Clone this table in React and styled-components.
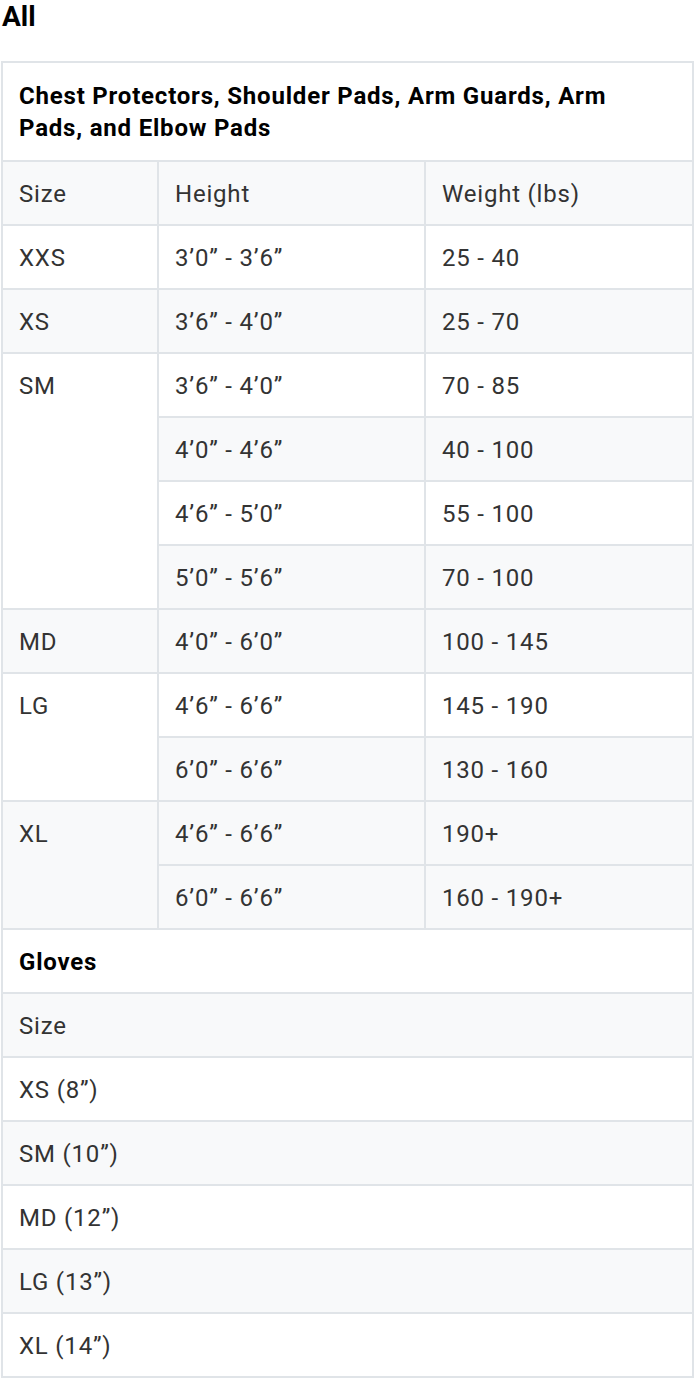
import styled, { createGlobalStyle } from "styled-components";

const chestRows = [
  { size: "XXS", shade: false, rows: [["3’0” - 3’6”", "25 - 40", false]] },
  { size: "XS", shade: true, rows: [["3’6” - 4’0”", "25 - 70", true]] },
  {
    size: "SM",
    shade: false,
    rows: [
      ["3’6” - 4’0”", "70 - 85", false],
      ["4’0” - 4’6”", "40 - 100", true],
      ["4’6” - 5’0”", "55 - 100", false],
      ["5’0” - 5’6”", "70 - 100", true],
    ],
  },
  { size: "MD", shade: true, rows: [["4’0” - 6’0”", "100 - 145", true]] },
  {
    size: "LG",
    shade: false,
    rows: [
      ["4’6” - 6’6”", "145 - 190", false],
      ["6’0” - 6’6”", "130 - 160", true],
    ],
  },
  {
    size: "XL",
    shade: true,
    rows: [
      ["4’6” - 6’6”", "190+", true],
      ["6’0” - 6’6”", "160 - 190+", true],
    ],
  },
];

const gloveSizes = ["XS (8”)", "SM (10”)", "MD (12”)", "LG (13”)", "XL (14”)"];

export default function App() {
  return (
    <>
      <GlobalStyle />
      <Page>
        <Heading>All</Heading>
        <SizeTable>
          <colgroup>
            <col style={{ width: 156 }} />
            <col style={{ width: 267 }} />
            <col style={{ width: 268 }} />
          </colgroup>
          <tbody>
            <tr>
              <TitleCell colSpan={3} $wrap>
                Chest Protectors, Shoulder Pads, Arm Guards, Arm Pads, and Elbow Pads
              </TitleCell>
            </tr>
            <tr>
              <Cell $shade>Size</Cell>
              <Cell $shade>Height</Cell>
              <Cell $shade>Weight (lbs)</Cell>
            </tr>
            {chestRows.map((group) =>
              group.rows.map(([height, weight, shade], i) => (
                <tr key={group.size + i}>
                  {i === 0 && (
                    <Cell rowSpan={group.rows.length} $shade={group.shade}>
                      {group.size}
                    </Cell>
                  )}
                  <Cell $shade={shade}>{height}</Cell>
                  <Cell $shade={shade}>{weight}</Cell>
                </tr>
              ))
            )}
            <tr>
              <TitleCell colSpan={3}>Gloves</TitleCell>
            </tr>
            <tr>
              <Cell colSpan={3} $shade>
                Size
              </Cell>
            </tr>
            {gloveSizes.map((s, i) => (
              <tr key={s}>
                <Cell colSpan={3} $shade={i % 2 === 1}>
                  {s}
                </Cell>
              </tr>
            ))}
          </tbody>
        </SizeTable>
      </Page>
    </>
  );
}

const Page = styled.div`
  padding: 0 0 0 1px;
  font-family: Roboto, "Liberation Sans", sans-serif;
`;

const Heading = styled.h3`
  margin: 0 0 27px 1px;
  font-size: 28px;
  line-height: 34px;
  font-weight: 700;
  color: #000;
`;

const SizeTable = styled.table`
  width: 693px;
  table-layout: fixed;
  border-collapse: separate;
  border-spacing: 0;
  border-top: 2px solid #e0e4e8;
  border-left: 2px solid #e0e4e8;
`;

const Cell = styled.td`
  box-sizing: border-box;
  padding: 14px 16px 12px;
  font-size: 24px;
  line-height: 36px;
  letter-spacing: 0.8px;
  color: #333;
  vertical-align: top;
  text-align: left;
  background: ${(p) => (p.$shade ? "#f8f9fa" : "#fff")};
  border-right: 2px solid #e0e4e8;
  border-bottom: 2px solid #e0e4e8;
`;

const TitleCell = styled(Cell)`
  padding: ${(p) => (p.$wrap ? "17px 16px 16px" : "14px 16px 12px")};
  line-height: ${(p) => (p.$wrap ? "32px" : "36px")};
  font-weight: 700;
  color: #000;
`;

const GlobalStyle = createGlobalStyle`
  body {
    margin: 0;
    background: #fff;
  }
`;
